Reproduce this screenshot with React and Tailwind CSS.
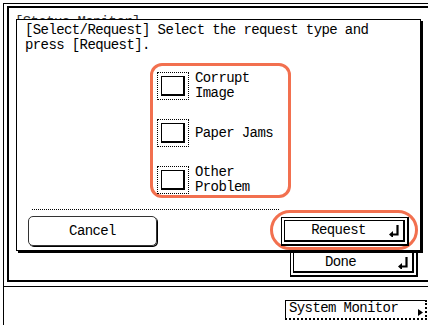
const ReturnIcon = () => (
  <svg width="12" height="13" viewBox="0 0 12 13">
    <path d="M9.5 1v9.5H4" stroke="#000" strokeWidth="2.2" fill="none" />
    <path d="M1 10.5 L5 7 L5 14 Z" fill="#000" />
  </svg>
);

function CheckRow({ label }) {
  return (
    <div className="h-[30px] flex items-center gap-[6px]">
      <div className="w-[32px] h-[28px] border border-dotted border-black p-[3px]">
        <div className="w-full h-full border-t border-l border-r-2 border-b-2 border-black bg-white"></div>
      </div>
      <div>{label}</div>
    </div>
  );
}

export default function App() {
  return (
    <div className="w-[428px] h-[325px] overflow-hidden bg-white text-black font-['Liberation_Mono',monospace] text-[14px] leading-[15px] tracking-[-0.6px]">
      {/* outer frame */}
      <div className="ml-[3px] mt-[3px] w-[440px] h-[284px] border-l border-t border-b border-black">
        <div className="ml-[3px] mt-[2px] w-[430px] h-[276px] border-l-2 border-t-2 border-b-2 border-black">
          {/* title of the screen behind, only its top shows */}
          <div className="h-[11px] overflow-hidden pl-[6px] pt-[7px] text-[#333] whitespace-nowrap">[Status Monitor]</div>

          {/* dialog */}
          <div className="ml-[7px] w-[405px] border border-black bg-white shadow-[2px_2px_0_0_#000]">
            <p className="pl-[8px] pt-[3px]">
              [Select/Request] Select the request type and
              <br />
              press [Request].
            </p>

            <div className="ml-[133px] mt-[10px] w-[141px] border-[3px] border-[#f2704f] rounded-[12px] pt-[5px] pl-[4px] pb-[0px]">
              <div className="flex flex-col gap-[17px]">
                <CheckRow label={<>Corrupt<br />Image</>} />
                <CheckRow label="Paper Jams" />
                <CheckRow label={<>Other<br />Problem</>} />
              </div>
            </div>

            <div className="ml-[15px] mt-[11px] w-[247px] border-t border-dotted border-black"></div>

            <div className="flex items-start">
              <button className="ml-[11px] mt-[6px] w-[129px] h-[30px] rounded-[5px] border border-[#333] shadow-[1px_1px_0_0_#000] flex items-center justify-center">
                Cancel
              </button>
              <div className="ml-[113px] w-[148px] h-[40px] rounded-full border-[3px] border-[#f2704f] pl-[8px] pt-[4px]">
                <div className="w-[128px] h-[29px] border border-r-2 border-b-2 border-black p-[2px]">
                  <div className="h-full border border-r-2 border-b-2 border-black flex items-center">
                    <span className="flex-1 text-center pl-[4px]">Request</span>
                    <span className="mr-[3px] flex"><ReturnIcon /></span>
                  </div>
                </div>
              </div>
            </div>
          </div>

          {/* Done button, mostly hidden behind the dialog */}
          <div className="ml-[281px] mt-[2px] w-[128px] h-[24px] border-l border-r-2 border-b-2 border-black pl-[2px] pr-[2px] pb-[2px]">
            <div className="h-full border-l border-r-2 border-b-2 border-black flex items-center">
              <span className="flex-1 text-center pr-[10px]">Done</span>
              <span className="mr-[3px] flex"><ReturnIcon /></span>
            </div>
          </div>
        </div>
      </div>

      {/* bottom panel */}
      <div className="ml-[3px] h-[38px] border-l border-black pt-[13px]">
        <div className="ml-[281px] w-[142px] h-[20px] border-r-2 border-b-2 border-dotted border-black shadow-[inset_1px_1px_0_0_#000] flex items-end justify-between">
          <span className="pl-[4px] pb-[2px] whitespace-nowrap">System Monitor</span>
          <svg width="5" height="7" viewBox="0 0 5 7" className="mb-[2px] mr-[2px]">
            <path d="M0 0 L5 3.5 L0 7 Z" fill="#000" />
          </svg>
        </div>
      </div>
    </div>
  );
}
